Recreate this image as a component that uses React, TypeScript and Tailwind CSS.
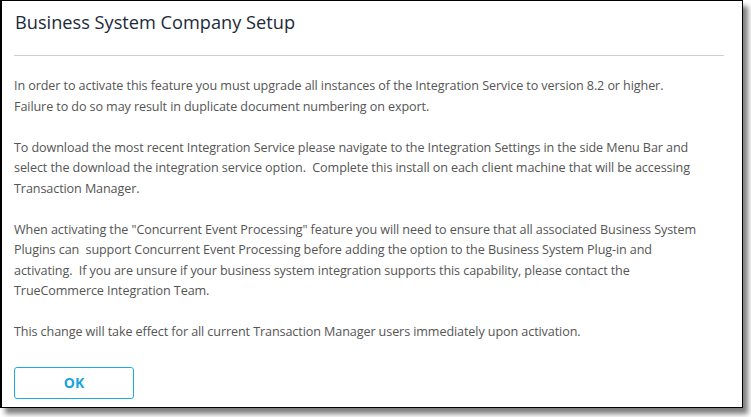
export default function App() {
  return (
    <div className="w-[751px] h-[417px] bg-white font-['Open_Sans',sans-serif]">
      <div className="w-[743px] h-[408px] bg-white border-black border-l-2 border-t border-r border-b shadow-[5px_6px_5px_rgba(0,0,0,0.5)] flex flex-col px-[12px]">
        {/* Header */}
        <h1 className="text-[18.2px] leading-[26px] text-[#1c2a3a] pt-[8px] pl-px">
          Business System Company Setup
        </h1>
        <div className="mt-[20px] h-px bg-[#cfcfcf] mr-[6px]" />

        {/* Body */}
        <div className="mt-[20px] text-[12.6px] leading-[20.5px] text-[#555] tracking-[-0.1px] space-y-[20.5px] whitespace-nowrap">
          <p>
            In order to activate this feature you must upgrade all instances of the Integration Service to version 8.2 or higher.
            <br />
            Failure to do so may result in duplicate document numbering on export.
          </p>
          <p>
            To download the most recent Integration Service please navigate to the Integration Settings in the side Menu Bar and
            <br />
            select the download the integration service option.&nbsp; Complete this install on each client machine that will be accessing
            <br />
            Transaction Manager.
          </p>
          <p>
            When activating the "Concurrent Event Processing" feature you will need to ensure that all associated Business System
            <br />
            Plugins can&nbsp; support Concurrent Event Processing before adding the option to the Business System Plug-in and
            <br />
            activating.&nbsp; If you are unsure if your business system integration supports this capability, please contact the
            <br />
            TrueCommerce Integration Team.
          </p>
          <p>This change will take effect for all current Transaction Manager users immediately upon activation.</p>
        </div>

        {/* Footer */}
        <div className="mt-[24px]">
          <button className="w-[120px] h-[32px] border border-[#1aaee0] rounded-[3px] text-[#1aa3dc] font-bold text-[14px]">
            OK
          </button>
        </div>
      </div>
    </div>
  );
}
